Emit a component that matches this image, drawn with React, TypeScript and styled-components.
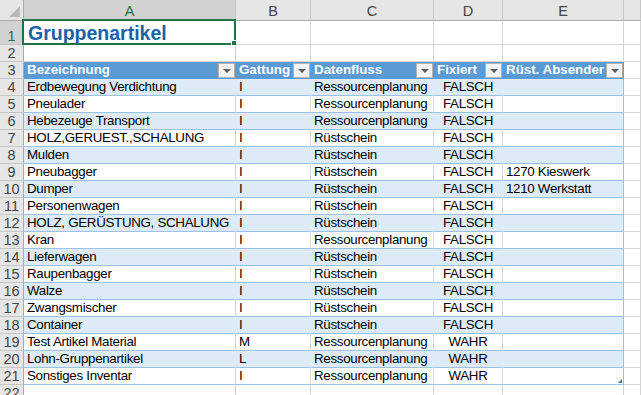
import React from "react";
import styled, { createGlobalStyle, css } from "styled-components";

const GlobalStyle = createGlobalStyle`
  html, body {
    margin: 0;
    padding: 0;
    background: #ffffff;
    overflow: hidden;
  }
  body {
    font-family: "Liberation Sans", Arial, sans-serif;
  }
`;

// the F column's letter sits past the window's right edge, so it stays empty
const columns = ["A", "B", "C", "D", "E", ""];

type Row = [string, string, string, string, string];

const data: Row[] = [
  ["Erdbewegung Verdichtung", "I", "Ressourcenplanung", "FALSCH", ""],
  ["Pneulader", "I", "Ressourcenplanung", "FALSCH", ""],
  ["Hebezeuge Transport", "I", "Ressourcenplanung", "FALSCH", ""],
  ["HOLZ,GERUEST.,SCHALUNG", "I", "Rüstschein", "FALSCH", ""],
  ["Mulden", "I", "Rüstschein", "FALSCH", ""],
  ["Pneubagger", "I", "Rüstschein", "FALSCH", "1270 Kieswerk"],
  ["Dumper", "I", "Rüstschein", "FALSCH", "1210 Werkstatt"],
  ["Personenwagen", "I", "Rüstschein", "FALSCH", ""],
  ["HOLZ, GERÜSTUNG, SCHALUNG", "I", "Rüstschein", "FALSCH", ""],
  ["Kran", "I", "Ressourcenplanung", "FALSCH", ""],
  ["Lieferwagen", "I", "Rüstschein", "FALSCH", ""],
  ["Raupenbagger", "I", "Rüstschein", "FALSCH", ""],
  ["Walze", "I", "Rüstschein", "FALSCH", ""],
  ["Zwangsmischer", "I", "Rüstschein", "FALSCH", ""],
  ["Container", "I", "Rüstschein", "FALSCH", ""],
  ["Test Artikel Material", "M", "Ressourcenplanung", "WAHR", ""],
  ["Lohn-Gruppenartikel", "L", "Ressourcenplanung", "WAHR", ""],
  ["Sonstiges Inventar", "I", "Ressourcenplanung", "WAHR", ""],
];

const headers = ["Bezeichnung", "Gattung", "Datenfluss", "Fixiert", "Rüst. Absender"];

const Sheet = styled.div`
  display: grid;
  grid-template-columns: 24px 212px 75px 123px 69px 121px 1fr;
  grid-template-rows: 21px 24px repeat(22, 17px);
  width: 641px;
  height: 395px;
  overflow: hidden;
  font-size: 13.33px;
  color: #000;
`;

const Corner = styled.div`
  position: relative;
  background: #e6e6e6;
  border-right: 1px solid #ababab;
  border-bottom: 1px solid #ababab;
  box-sizing: border-box;

  &::after {
    content: "";
    position: absolute;
    right: 3px;
    bottom: 3px;
    width: 0;
    height: 0;
    border-left: 11px solid transparent;
    border-bottom: 11px solid #b9b9b9;
  }
`;

const ColHead = styled.div<{ $active?: boolean }>`
  display: flex;
  align-items: center;
  justify-content: center;
  box-sizing: border-box;
  background: ${(p) => (p.$active ? "#d2d2d2" : "#e6e6e6")};
  color: ${(p) => (p.$active ? "#217346" : "#444")};
  border-right: 1px solid #c6c6c6;
  border-bottom: 1px solid #ababab;
  font-size: 14.5px;
  padding-top: 1px;
`;

const RowHead = styled.div<{ $active?: boolean }>`
  display: flex;
  align-items: flex-end;
  justify-content: center;
  box-sizing: border-box;
  background: ${(p) => (p.$active ? "#d2d2d2" : "#e6e6e6")};
  color: ${(p) => (p.$active ? "#217346" : "#444")};
  border-right: 1px solid #ababab;
  border-bottom: 1px solid #c6c6c6;
  font-size: 14.5px;
  line-height: 16px;
`;

type Kind = "plain" | "head" | "band" | "row";

const kinds = {
  plain: css`
    background: #fff;
    border-right-color: #d4d4d4;
    border-bottom-color: #d4d4d4;
  `,
  head: css`
    background: #5b9bd5;
    color: #fff;
    font-weight: bold;
    border-right-color: #5b9bd5;
    border-bottom-color: #5b9bd5;
  `,
  band: css`
    background: #ddebf7;
    border-right-color: #ddebf7;
    border-bottom-color: #9bc2e6;
    letter-spacing: -0.3px;
  `,
  row: css`
    background: #fff;
    border-right-color: #d4d4d4;
    border-bottom-color: #9bc2e6;
    letter-spacing: -0.3px;
  `,
};

const Cell = styled.div<{ $kind: Kind; $center?: boolean; $edge?: boolean }>`
  position: relative;
  display: flex;
  align-items: flex-end;
  justify-content: ${(p) => (p.$center ? "center" : "flex-start")};
  box-sizing: border-box;
  padding: 0 3px 0 3px;
  border-right: 1px solid;
  border-bottom: 1px solid;
  white-space: nowrap;
  line-height: 16px;
  ${(p) => kinds[p.$kind]}
  ${(p) =>
    p.$edge &&
    css`
      border-right-color: #9bc2e6;
    `}
`;

const Title = styled.span`
  font-size: 19.5px;
  font-weight: bold;
  color: #1b62aa;
  line-height: 22px;
  padding-left: 1px;
`;

const Selection = styled.div`
  position: absolute;
  left: -2px;
  top: -2px;
  right: -1px;
  bottom: -1px;
  border: 2px solid #217346;
  pointer-events: none;

  &::after {
    content: "";
    position: absolute;
    right: -4px;
    bottom: -4px;
    width: 5px;
    height: 5px;
    background: #217346;
    border: 1px solid #fff;
  }
`;

const FilterButton = styled.div`
  position: absolute;
  right: 0;
  top: 1px;
  width: 17px;
  height: 15px;
  box-sizing: border-box;
  background: #f3f3f3;
  border: 1px solid #b4b4b4;
  display: flex;
  align-items: center;
  justify-content: center;

  &::before {
    content: "";
    width: 0;
    height: 0;
    border-left: 4px solid transparent;
    border-right: 4px solid transparent;
    border-top: 4px solid #5f5f5f;
  }
`;

const ResizeHandle = styled.div`
  position: absolute;
  right: 1px;
  bottom: 1px;
  width: 0;
  height: 0;
  border-left: 4px solid transparent;
  border-bottom: 4px solid #3c6fc4;
`;

export default function App() {
  const firstTableRow = 4;

  return (
    <>
      <GlobalStyle />
      <Sheet>
        <Corner />
        {columns.map((c, i) => (
          <ColHead key={i} $active={c === "A"}>
            {c}
          </ColHead>
        ))}

        <RowHead $active>1</RowHead>
        <Cell $kind="plain">
          <Title>Gruppenartikel</Title>
          <Selection />
        </Cell>
        {[1, 2, 3, 4, 5].map((i) => (
          <Cell key={i} $kind="plain" />
        ))}

        <RowHead>2</RowHead>
        {columns.map((_, i) => (
          <Cell key={i} $kind="plain" />
        ))}

        <RowHead>3</RowHead>
        {headers.map((h) => (
          <Cell key={h} $kind="head">
            {h}
            <FilterButton />
          </Cell>
        ))}
        <Cell $kind="plain" />

        {data.map((row, i) => {
          const n = firstTableRow + i;
          const kind: Kind = n % 2 === 0 ? "band" : "row";
          const last = i === data.length - 1;
          return (
            <React.Fragment key={n}>
              <RowHead>{n}</RowHead>
              <Cell $kind={kind}>{row[0]}</Cell>
              <Cell $kind={kind}>{row[1]}</Cell>
              <Cell $kind={kind}>{row[2]}</Cell>
              <Cell $kind={kind} $center>
                {row[3]}
              </Cell>
              <Cell $kind={kind} $edge>
                {row[4]}
                {last && <ResizeHandle />}
              </Cell>
              <Cell $kind="plain" />
            </React.Fragment>
          );
        })}

        <RowHead>22</RowHead>
        {columns.map((_, i) => (
          <Cell key={i} $kind="plain" />
        ))}
      </Sheet>
    </>
  );
}
